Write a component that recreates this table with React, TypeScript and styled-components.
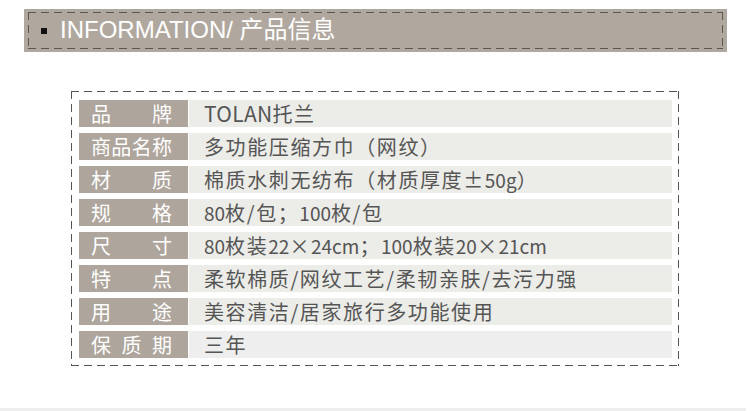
import styled, { createGlobalStyle } from "styled-components";

const GlobalStyle = createGlobalStyle`
  html, body {
    margin: 0;
    padding: 0;
    background: #fff;
  }
  body {
    font-family: "Liberation Sans", "Noto Sans CJK SC", sans-serif;
  }
`;

// dashed line built from gradients so the dash length matches (8px on, 5px off)
const dashed = (color: string) => `
  background-image:
    repeating-linear-gradient(90deg, ${color} 0 8px, transparent 8px 13px),
    repeating-linear-gradient(90deg, ${color} 0 8px, transparent 8px 13px),
    repeating-linear-gradient(180deg, ${color} 0 8px, transparent 8px 13px),
    repeating-linear-gradient(180deg, ${color} 0 8px, transparent 8px 13px);
  background-size: 100% 1px, 100% 1px, 1px 100%, 1px 100%;
  background-position: left top, left bottom, left top, right top;
  background-repeat: no-repeat;
`;

const Page = styled.div`
  width: 750px;
  height: 411px;
  display: flex;
  flex-direction: column;
  overflow: hidden;
`;

const Banner = styled.div`
  margin: 9px 0 0 24px;
  width: 703px;
  height: 43px;
  padding: 3px 4px 3px 4px;
  box-sizing: border-box;
  background: #b0a79e;
`;

const BannerInner = styled.div`
  ${dashed("#5b5651")}
  height: 100%;
  display: flex;
  align-items: center;
  padding-left: 13px;
  gap: 13px;
`;

const Bullet = styled.span`
  width: 6px;
  height: 6px;
  background: #111;
  margin-top: 1px;
`;

const BannerTitle = styled.h2`
  margin: 0;
  font-family: "Liberation Sans", "Noto Sans CJK SC", sans-serif;
  font-weight: normal;
  font-size: 24px;
  line-height: 30px;
  color: #fff;
`;

const Frame = styled.div`
  ${dashed("#555")}
  margin: 39px 0 0 71px;
  width: 608px;
  height: 277px;
  box-sizing: border-box;
  padding: 9px 7px 0 8px;
  display: flex;
  flex-direction: column;
  gap: 6px;
`;

const Row = styled.div`
  display: flex;
  height: 27px;
  gap: 1px;
`;

const Label = styled.div`
  width: 109px;
  flex-shrink: 0;
  box-sizing: border-box;
  padding: 0 16px 0 12px;
  background: #aea59c;
  color: #fff;
  font-family: "Noto Sans CJK SC", sans-serif;
  font-size: 20px;
  line-height: 27px;
  display: flex;
  justify-content: space-between;
  white-space: nowrap;
`;

const Value = styled.div<{ $last?: boolean }>`
  flex: 1;
  background: ${(p) => (p.$last ? "#eeeeee" : "#ecece8")};
  color: #555;
  font-family: "Noto Sans CJK SC", sans-serif;
  font-size: 20px;
  letter-spacing: 1.6px;
  line-height: 27px;
  padding-left: 15px;
  white-space: nowrap;
`;

// latin letters and digits sit tighter than the CJK text around them
const Latin = styled.span<{ $caps?: boolean }>`
  font-size: ${(p) => (p.$caps ? "21px" : "19px")};
  letter-spacing: ${(p) => (p.$caps ? "0.3px" : "0")};
  line-height: 1;
`;

const Footer = styled.div`
  margin-top: 42px;
  width: 746px;
  height: 3px;
  background: #eeeeee;
`;

const rows = [
  ["品牌", "TOLAN托兰"],
  ["商品名称", "多功能压缩方巾（网纹）"],
  ["材质", "棉质水刺无纺布（材质厚度±50g）"],
  ["规格", "80枚/包；100枚/包"],
  ["尺寸", "80枚装22×24cm；100枚装20×21cm"],
  ["特点", "柔软棉质/网纹工艺/柔韧亲肤/去污力强"],
  ["用途", "美容清洁/居家旅行多功能使用"],
  ["保质期", "三年"],
];

function renderValue(text: string) {
  return text.split(/([A-Za-z0-9]+)/).map((part, i) =>
    /^[A-Za-z0-9]+$/.test(part) ? (
      <Latin key={i} $caps={/^[A-Z]+$/.test(part)}>
        {part}
      </Latin>
    ) : (
      part
    )
  );
}

export default function App() {
  return (
    <>
      <GlobalStyle />
      <Page>
        <Banner>
          <BannerInner>
            <Bullet />
            <BannerTitle>INFORMATION/ 产品信息</BannerTitle>
          </BannerInner>
        </Banner>
        <Frame>
          {rows.map(([label, value], i) => (
            <Row key={label}>
              <Label>
                {label.split("").map((ch, j) => (
                  <span key={j}>{ch}</span>
                ))}
              </Label>
              <Value $last={i === rows.length - 1}>{renderValue(value)}</Value>
            </Row>
          ))}
        </Frame>
        <Footer />
      </Page>
    </>
  );
}
